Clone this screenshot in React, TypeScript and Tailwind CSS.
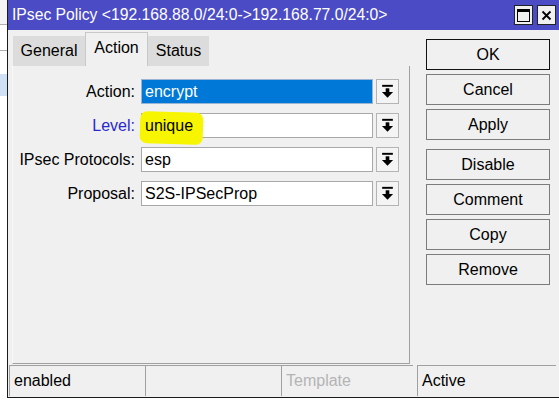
import React from "react";

const font = { fontFamily: '"Liberation Sans", Arial, sans-serif' };

// little "drop down" glyph used by winbox combo boxes
const DropIcon: React.FC = () => (
  <svg width="13" height="15" viewBox="0 0 12 14">
    <rect x="1" y="0.8" width="10" height="1.8" fill="#000" />
    <rect x="4.3" y="4" width="3.4" height="4" fill="#000" />
    <polygon points="0.8,7.5 11.2,7.5 6,12.8" fill="#000" />
  </svg>
);

const fields = [
  { label: "Action:", value: "encrypt", selected: true },
  { label: "Level:", value: "unique", blue: true, marked: true },
  { label: "IPsec Protocols:", value: "esp" },
  { label: "Proposal:", value: "S2S-IPSecProp" },
];

const buttons = ["OK", "Cancel", "Apply", "Disable", "Comment", "Copy", "Remove"];

const App: React.FC = () => {
  return (
    <div
      className="w-[559px] h-[403px] bg-white overflow-hidden flex text-[16px] text-black"
      style={font}
    >
      {/* bits of the window behind */}
      <div className="w-[7px] flex flex-col bg-[#f4f4f4]">
        <div className="h-[25px] border-b border-[#b0b0b0]" />
        <div className="h-[26px] border-b border-[#b0b0b0] bg-white" />
        <div className="h-[23px] bg-white" />
        <div className="h-[22px] bg-[#cfe0f5]" />
        <div className="flex-1 bg-white" />
      </div>

      <div className="w-[552px] h-[398px] border-l border-b border-[#1a1a1a] bg-[#f0f0f0] flex flex-col">
        {/* title bar */}
        <div className="h-[30px] bg-[#4b4bc6] flex items-center pl-[4px] pr-[3px]">
          <span className="text-white text-[15.7px] leading-none flex-1 whitespace-nowrap">
            IPsec Policy &lt;192.168.88.0/24:0-&gt;192.168.77.0/24:0&gt;
          </span>
          <div className="flex gap-[4px]">
            <div className="w-[19px] h-[20px] bg-[#f0f0f0] border border-[#222] flex items-center justify-center">
              <div className="w-[13px] h-[13px] border border-black border-t-[3px]" />
            </div>
            <div className="w-[19px] h-[20px] bg-[#f0f0f0] border border-[#222] flex items-center justify-center">
              <svg width="11" height="11" viewBox="0 0 11 11">
                <path d="M1.5 1.5 L9.5 9.5 M9.5 1.5 L1.5 9.5" stroke="#000" strokeWidth="1.8" />
              </svg>
            </div>
          </div>
        </div>

        <div className="flex flex-1 pl-[4px]">
          {/* left: tabs + page */}
          <div className="w-[398px] flex flex-col pt-[2px]">
            <div className="flex items-end h-[34px] pl-[1px]">
              <div className="h-[30px] w-[72px] bg-[#dcdcdc] flex items-center justify-center">General</div>
              <div className="h-[34px] w-[63px] bg-[#f0f0f0] border-t border-l border-r border-[#c8c8c8] flex items-center justify-center pb-[3px]">
                Action
              </div>
              <div className="h-[30px] w-[61px] bg-[#dcdcdc] flex items-center justify-center">Status</div>
            </div>
            <div className="h-[298px] border-r border-b border-[#a0a0a0] border-l border-l-[#f8f8f8] pt-[13px] flex flex-col gap-[9px]">
              {fields.map((f) => (
                <div key={f.label} className="flex items-center h-[25px]">
                  <div
                    className={`w-[124px] text-right pr-[2px] ${f.blue ? "text-[#2828d0]" : ""}`}
                  >
                    {f.label}
                  </div>
                  <div
                    className={`ml-[4px] w-[232px] h-[25px] border flex items-center pl-[3px] ${
                      f.selected
                        ? "bg-[#0078d7] text-white border-[#9ab4d4]"
                        : "bg-white border-[#a8a8a8]"
                    }`}
                  >
                    {f.marked ? (
                      <span className="relative">
                        <span className="absolute -left-[5px] -right-[10px] top-[-2px] bottom-[-6px] bg-[#f7f500] rounded-[7px] rotate-[2deg]" />
                        <span className="relative">{f.value}</span>
                      </span>
                    ) : (
                      f.value
                    )}
                  </div>
                  <div className="ml-[3px] w-[23px] h-[25px] border border-[#b4b4b4] bg-[#f4f4f4] flex items-center justify-center">
                    <DropIcon />
                  </div>
                </div>
              ))}
            </div>
          </div>

          {/* right: buttons */}
          <div className="ml-[16px] pt-[9px] flex flex-col w-[124px]">
            {buttons.map((b, i) => (
              <div
                key={b}
                className={`h-[31px] flex items-center justify-center border bg-[#f0f0f0] ${
                  i === 0 ? "border-[#111]" : "border-[#7c7c7c]"
                } ${i === 0 ? "" : i === 3 ? "mt-[9px]" : "mt-[4px]"}`}
              >
                {b}
              </div>
            ))}
          </div>
        </div>

        {/* status bar */}
        <div className="h-[32px] flex pl-[1px] pr-[3px] pb-[1px]">
          <div className="w-[136px] border-t border-l border-[#a0a0a0] flex items-center pl-[4px]">enabled</div>
          <div className="w-[136px] border-t border-l border-[#a0a0a0]" />
          <div className="w-[132px] border-t border-l border-[#a0a0a0] flex items-center pl-[4px] text-[#b4b4b4]">
            Template
          </div>
          <div className="ml-[4px] flex-1 border-t border-l border-[#a0a0a0] flex items-center pl-[4px]">Active</div>
        </div>
      </div>
    </div>
  );
};

export default App;
